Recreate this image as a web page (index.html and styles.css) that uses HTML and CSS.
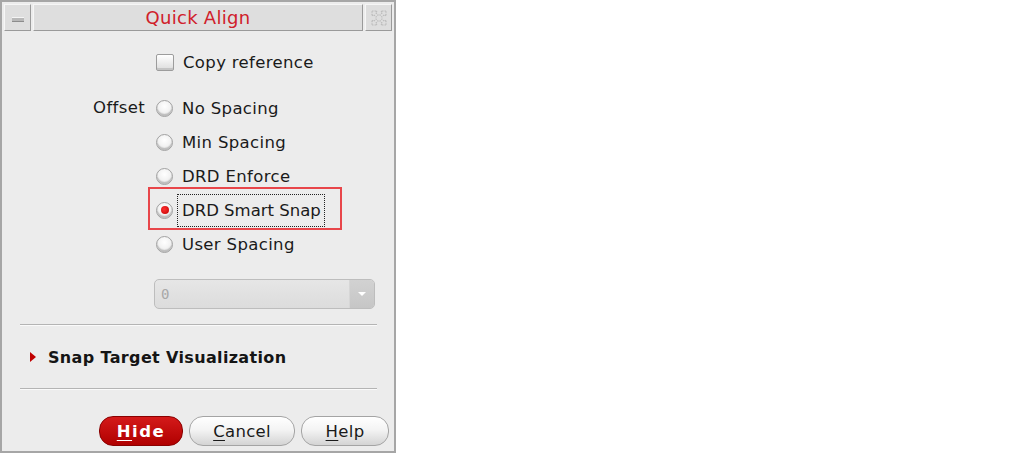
FILE: index.html
```html
<!DOCTYPE html>
<html>
<head>
<meta charset="utf-8">
<link rel="stylesheet" href="styles.css">
</head>
<body>
<div class="window">
  <div class="titlebar">
    <div class="tb-btn tb-min"><span class="min-bar"></span></div>
    <div class="tb-title">Quick Align</div>
    <div class="tb-btn tb-max">
      <svg width="20" height="20" viewBox="0 0 20 20">
        <g fill="none" stroke="#bdbdbd" stroke-width="1.2" stroke-dasharray="1.5 1">
          <path d="M3 3 L8 3 L6.5 4.5 L9 7 L7 9 L4.5 6.5 L3 8 Z"/>
          <path d="M17 3 L12 3 L13.5 4.5 L11 7 L13 9 L15.5 6.5 L17 8 Z"/>
          <path d="M3 17 L8 17 L6.5 15.5 L9 13 L7 11 L4.5 13.5 L3 12 Z"/>
          <path d="M17 17 L12 17 L13.5 15.5 L11 13 L13 11 L15.5 13.5 L17 12 Z"/>
        </g>
      </svg>
    </div>
  </div>
  <div class="content">
    <div class="row check-row">
      <span class="checkbox"></span>
      <span class="opt-text">Copy reference</span>
    </div>
    <div class="offset-group">
      <div class="offset-label">Offset</div>
      <div class="radios">
        <div class="row"><span class="radio"></span><span class="opt-text">No Spacing</span></div>
        <div class="row"><span class="radio"></span><span class="opt-text">Min Spacing</span></div>
        <div class="row"><span class="radio"></span><span class="opt-text">DRD Enforce</span></div>
        <div class="row selected-row">
          <span class="radio checked"></span><span class="opt-text focused">DRD Smart Snap</span>
          <span class="highlight"></span>
        </div>
        <div class="row"><span class="radio"></span><span class="opt-text">User Spacing</span></div>
        <div class="combo">
          <span class="combo-value">0</span>
          <span class="combo-arrow"><span class="tri"></span></span>
        </div>
      </div>
    </div>
    <div class="separator"></div>
    <div class="section-row">
      <span class="expander"></span>
      <span class="section-title">Snap Target Visualization</span>
    </div>
    <div class="separator sep2"></div>
    <div class="buttons">
      <button class="btn btn-primary"><u>H</u>ide</button>
      <button class="btn btn-cancel"><u>C</u>ancel</button>
      <button class="btn btn-help"><u>H</u>elp</button>
    </div>
  </div>
</div>
</body>
</html>
```

FILE: styles.css
```css
html, body {
  margin: 0;
  padding: 0;
  background: #ffffff;
}
body {
  font-family: "DejaVu Sans", "Liberation Sans", sans-serif;
  font-size: 16.5px;
  color: #1a1a1a;
}
.window {
  width: 392px;
  height: 449px;
  border: 2px solid #a6a6a6;
  background: #ececec;
  display: flex;
  flex-direction: column;
  box-sizing: content-box;
}
.titlebar {
  display: flex;
  gap: 2px;
  padding: 2px 2px 0 2px;
  height: 28px;
}
.tb-btn, .tb-title {
  background: #dedede;
  border-top: 1px solid #f6f6f6;
  border-left: 1px solid #f6f6f6;
  border-right: 1px solid #9a9a9a;
  border-bottom: 1px solid #9a9a9a;
  box-sizing: border-box;
  height: 27px;
}
.tb-btn {
  width: 27px;
  display: flex;
  align-items: center;
  justify-content: center;
}
.tb-min .min-bar {
  display: block;
  width: 12px;
  height: 3px;
  margin-top: 4px;
  background: #b8b8b8;
  border-top: 1px solid #f4f4f4;
  border-bottom: 1px solid #8c8c8c;
}
.tb-title {
  flex: 1;
  text-align: center;
  color: #d0202a;
  font-size: 18px;
  line-height: 25px;
  letter-spacing: 0.3px;
}
.content {
  flex: 1;
  display: flex;
  flex-direction: column;
  padding: 0 16px 0 16px;
}
.row {
  display: flex;
  align-items: center;
  height: 34px;
  position: relative;
  letter-spacing: 0.35px;
}
.check-row {
  margin-top: 13px;
  padding-left: 138px;
}
.checkbox {
  width: 16px;
  height: 15px;
  border: 1px solid #9c9c9c;
  border-radius: 2px;
  background: linear-gradient(#ffffff, #dcdcdc);
  box-shadow: inset 0 -2px 0 #c4c4c4;
  margin-right: 9px;
}
.opt-text {
  white-space: nowrap;
}
.offset-group {
  display: flex;
  margin-top: 12px;
}
.offset-label {
  width: 127px;
  text-align: right;
  padding-right: 11px;
  height: 34px;
  line-height: 34px;
  letter-spacing: 0.35px;
}
.radios {
  display: flex;
  flex-direction: column;
}
.radio {
  width: 17px;
  height: 17px;
  border-radius: 50%;
  border: 1px solid #a2a2a2;
  box-sizing: border-box;
  background: radial-gradient(circle at 50% 35%, #ffffff 0%, #f2f2f2 50%, #c8c8c8 100%);
  box-shadow: inset 0 -2px 1px #bdbdbd;
  margin-right: 9px;
  position: relative;
}
.radio.checked::after {
  content: "";
  position: absolute;
  left: 3.5px;
  top: 3.5px;
  width: 8px;
  height: 8px;
  border-radius: 50%;
  background: radial-gradient(circle at 40% 40%, #ff3030, #c00000);
}
.focused {
  outline: 1px dotted #222;
  outline-offset: 0;
  padding: 6px 3px 6px 4px;
  margin-left: -4px;
  line-height: 19px;
  letter-spacing: 0;
}
.highlight {
  position: absolute;
  left: -8px;
  top: -6px;
  width: 190px;
  height: 39px;
  border: 2px solid #e8464a;
  pointer-events: none;
}
.combo {
  margin-top: 18px;
  width: 221px;
  height: 30px;
  box-sizing: border-box;
  border: 1px solid #bdbdbd;
  border-radius: 5px;
  background: linear-gradient(#e6e6e6, #dcdcdc);
  display: flex;
  align-items: center;
  margin-left: -2px;
  overflow: hidden;
}
.combo-value {
  flex: 1;
  font-family: "DejaVu Sans Mono", "Liberation Mono", monospace;
  font-size: 14px;
  color: #a8a8a8;
  padding-left: 6px;
}
.combo-arrow {
  width: 24px;
  height: 100%;
  background: linear-gradient(#d2d2d2, #c6c6c6);
  border-left: 1px solid #d6d6d6;
  display: flex;
  align-items: center;
  justify-content: center;
}
.tri {
  width: 0;
  height: 0;
  border-left: 4px solid transparent;
  border-right: 4px solid transparent;
  border-top: 4px solid #ffffff;
}
.separator {
  margin-top: 15px;
  height: 1px;
  background: #b4b4b4;
  border-bottom: 1px solid #fafafa;
  width: 357px;
  margin-left: 2px;
}
.section-row {
  display: flex;
  align-items: center;
  height: 34px;
  margin-top: 14px;
  padding-left: 12px;
}
.expander {
  width: 0;
  height: 0;
  border-top: 5px solid transparent;
  border-bottom: 5px solid transparent;
  border-left: 6px solid #c00000;
  margin-right: 12px;
}
.section-title {
  font-weight: bold;
  font-size: 16px;
  letter-spacing: 0.35px;
  color: #151515;
}
.sep2 {
  margin-top: 14px;
}
.buttons {
  display: flex;
  justify-content: flex-end;
  gap: 6px;
  margin-top: 26px;
  margin-right: -11px;
}
.btn {
  height: 30px;
  border-radius: 14px;
  font-family: "DejaVu Sans", "Liberation Sans", sans-serif;
  font-size: 16.5px;
  padding: 0;
  box-sizing: border-box;
  letter-spacing: 0.3px;
}
.btn u {
  text-underline-offset: 3px;
}
.btn-primary {
  width: 84px;
  background: linear-gradient(#d41a1a, #b00000);
  border: 1px solid #8a0000;
  color: #ffffff;
  font-weight: bold;
  letter-spacing: 1.5px;
}
.btn-cancel, .btn-help {
  background: linear-gradient(#ffffff 0%, #f4f4f4 45%, #d4d4d4 100%);
  border: 1px solid #a4a4a4;
  color: #1a1a1a;
}
.btn-cancel {
  width: 106px;
}
.btn-help {
  width: 88px;
}
```
